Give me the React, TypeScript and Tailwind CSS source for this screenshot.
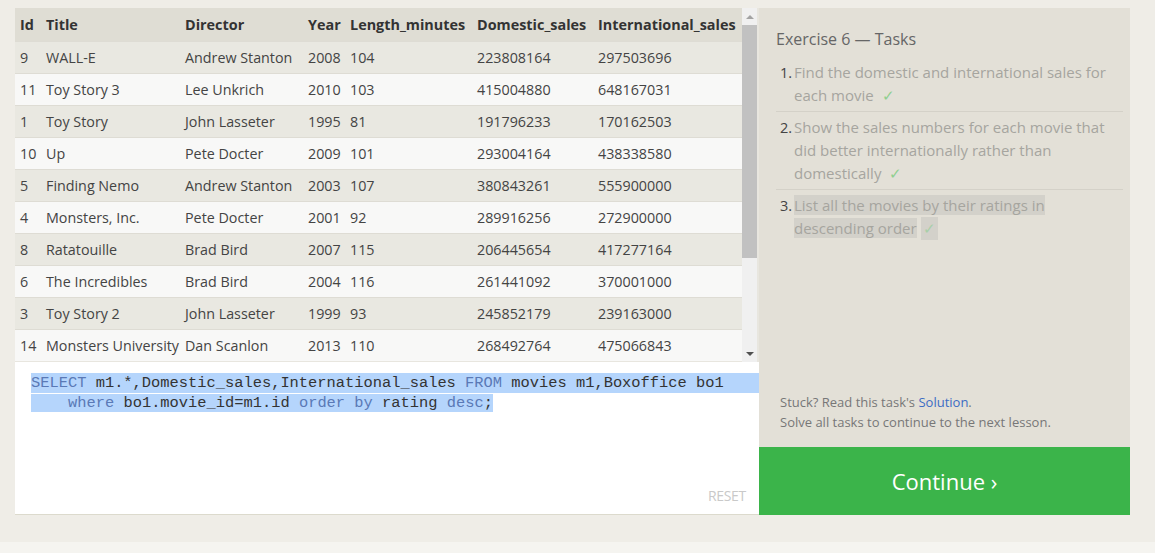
const movies = [
  { id: 9, title: 'WALL-E', director: 'Andrew Stanton', year: 2008, length: 104, dom: 223808164, intl: 297503696 },
  { id: 11, title: 'Toy Story 3', director: 'Lee Unkrich', year: 2010, length: 103, dom: 415004880, intl: 648167031 },
  { id: 1, title: 'Toy Story', director: 'John Lasseter', year: 1995, length: 81, dom: 191796233, intl: 170162503 },
  { id: 10, title: 'Up', director: 'Pete Docter', year: 2009, length: 101, dom: 293004164, intl: 438338580 },
  { id: 5, title: 'Finding Nemo', director: 'Andrew Stanton', year: 2003, length: 107, dom: 380843261, intl: 555900000 },
  { id: 4, title: 'Monsters, Inc.', director: 'Pete Docter', year: 2001, length: 92, dom: 289916256, intl: 272900000 },
  { id: 8, title: 'Ratatouille', director: 'Brad Bird', year: 2007, length: 115, dom: 206445654, intl: 417277164 },
  { id: 6, title: 'The Incredibles', director: 'Brad Bird', year: 2004, length: 116, dom: 261441092, intl: 370001000 },
  { id: 3, title: 'Toy Story 2', director: 'John Lasseter', year: 1999, length: 93, dom: 245852179, intl: 239163000 },
  { id: 14, title: 'Monsters University', director: 'Dan Scanlon', year: 2013, length: 110, dom: 268492764, intl: 475066843 },
];

const cols = ['w-[26px]', 'w-[139px]', 'w-[123px]', 'w-[42px]', 'w-[127px]', 'w-[121px]', 'flex-1'];
const headers = ['Id', 'Title', 'Director', 'Year', 'Length_minutes', 'Domestic_sales', 'International_sales'];

const tasks = [
  { n: 1, text: 'Find the domestic and international sales for each movie' },
  { n: 2, text: 'Show the sales numbers for each movie that did better internationally rather than domestically' },
];

export default function App() {
  return (
    <div className="w-full h-[553px] bg-[#efede7] flex flex-col font-['Open_Sans',sans-serif] overflow-hidden">
      <div className="flex pl-[15px] pt-[8px] h-[542px]">
        {/* Left: results + editor */}
        <div className="w-[744px] h-[507px] flex flex-col bg-white border-b border-[#dcdacd]">
          <div className="flex h-[354px] bg-[#e8e6df]">
            <div className="w-[727px] flex flex-col text-[14.3px] text-[#444]">
              <div className="flex h-[33px] items-center bg-[#dfddd4] font-bold text-[#333] text-[14.4px]">
                {headers.map((h, i) => (
                  <div key={h} className={`${cols[i]} pl-[5px] whitespace-nowrap`}>{h}</div>
                ))}
              </div>
              {movies.map((m, r) => (
                <div
                  key={m.id}
                  className={`flex h-[32px] items-center border-t border-[#dedcd4] ${r % 2 === 0 ? 'bg-[#e9e8e1]' : 'bg-[#f8f8f7]'}`}
                >
                  {[m.id, m.title, m.director, m.year, m.length, m.dom, m.intl].map((v, i) => (
                    <div key={i} className={`${cols[i]} pl-[5px] whitespace-nowrap`}>{v}</div>
                  ))}
                </div>
              ))}
            </div>
            {/* scrollbar */}
            <div className="w-[15px] bg-[#f0f0f0] flex flex-col items-center">
              <div className="h-[17px] flex items-center justify-center">
                <div className="w-0 h-0 border-l-[4px] border-r-[4px] border-b-[4px] border-l-transparent border-r-transparent border-b-[#a3a3a3]" />
              </div>
              <div className="w-[15px] h-[233px] bg-[#c1c1c1]" />
              <div className="flex-1" />
              <div className="h-[17px] flex items-center justify-center">
                <div className="w-0 h-0 border-l-[4px] border-r-[4px] border-t-[4px] border-l-transparent border-r-transparent border-t-[#505050]" />
              </div>
            </div>
            <div className="w-[2px] bg-[#e8e6df]" />
          </div>
          <div className="flex-1 flex flex-col pt-[11px] font-['Liberation_Mono',monospace] text-[15.4px] leading-[20px] text-[#333]">
            <div className="ml-[16px] bg-[#b5d5fc] whitespace-pre">
              <span className="text-[#5a79b6]">SELECT</span> m1.*,Domestic_sales,International_sales <span className="text-[#5a79b6]">FROM</span> movies m1,Boxoffice bo1
            </div>
            <div className="ml-[16px]">
              <span className="bg-[#b5d5fc] whitespace-pre pl-[37px]">
                <span className="text-[#5a79b6]">where</span> bo1.movie_id=m1.id <span className="text-[#5a79b6]">order by</span> rating <span className="text-[#5a79b6]">desc</span>;
              </span>
            </div>
            <div className="flex-1" />
            <div className="self-end pr-[13px] pb-[8px] text-[14px] text-[#c9c9c9] font-['Open_Sans',sans-serif] tracking-[-0.3px]">RESET</div>
          </div>
        </div>

        {/* Right: tasks */}
        <div className="w-[371px] h-[507px] flex flex-col">
          <div className="flex-1 bg-[#e3e0d7] pl-[17px] pr-[7px] pt-[20px] flex flex-col">
            <div className="text-[16px] text-[#666] leading-[22px]">Exercise 6 — Tasks</div>
            <ol className="mt-[11px] text-[15px] leading-[23px]">
              {tasks.map((t) => (
                <li key={t.n} className="flex pb-[4px] pt-[4px] border-b border-[#d4d1c8] first:pt-0">
                  <span className="w-[18px] text-right pr-[2px] text-[#444] shrink-0 text-[14.5px]">{t.n}.</span>
                  <span className="text-[#a6a59f]">
                    {t.text} <span className="inline-block text-[#8fcf8f] ml-[4px] leading-[23px]">✓</span>
                  </span>
                </li>
              ))}
              <li className="flex pt-[4px]">
                <span className="w-[18px] text-right pr-[2px] text-[#444] shrink-0 text-[14.5px]">3.</span>
                <span className="text-[#a6a59f] w-[260px]">
                  <span className="bg-[#d3d1ca]">List all the movies by their ratings in descending order</span>{' '}
                  <span className="inline-block bg-[#d3d1ca] px-[2px] text-[#a8cfa8] leading-[23px]">✓</span>
                </span>
              </li>
            </ol>
            <div className="flex-1" />
            <div className="text-[13px] text-[#777] leading-[20px] pl-[4px] pb-[15px]">
              <div>
                Stuck? Read this task's <span className="text-[#3c6cc4]">Solution</span>.
              </div>
              <div>Solve all tasks to continue to the next lesson.</div>
            </div>
          </div>
          <div className="h-[68px] bg-[#3bb44a] flex items-center justify-center text-white text-[22px]">
            Continue ›
          </div>
        </div>
      </div>
      <div className="flex-1 bg-[#f5f4f0]" />
    </div>
  );
}
